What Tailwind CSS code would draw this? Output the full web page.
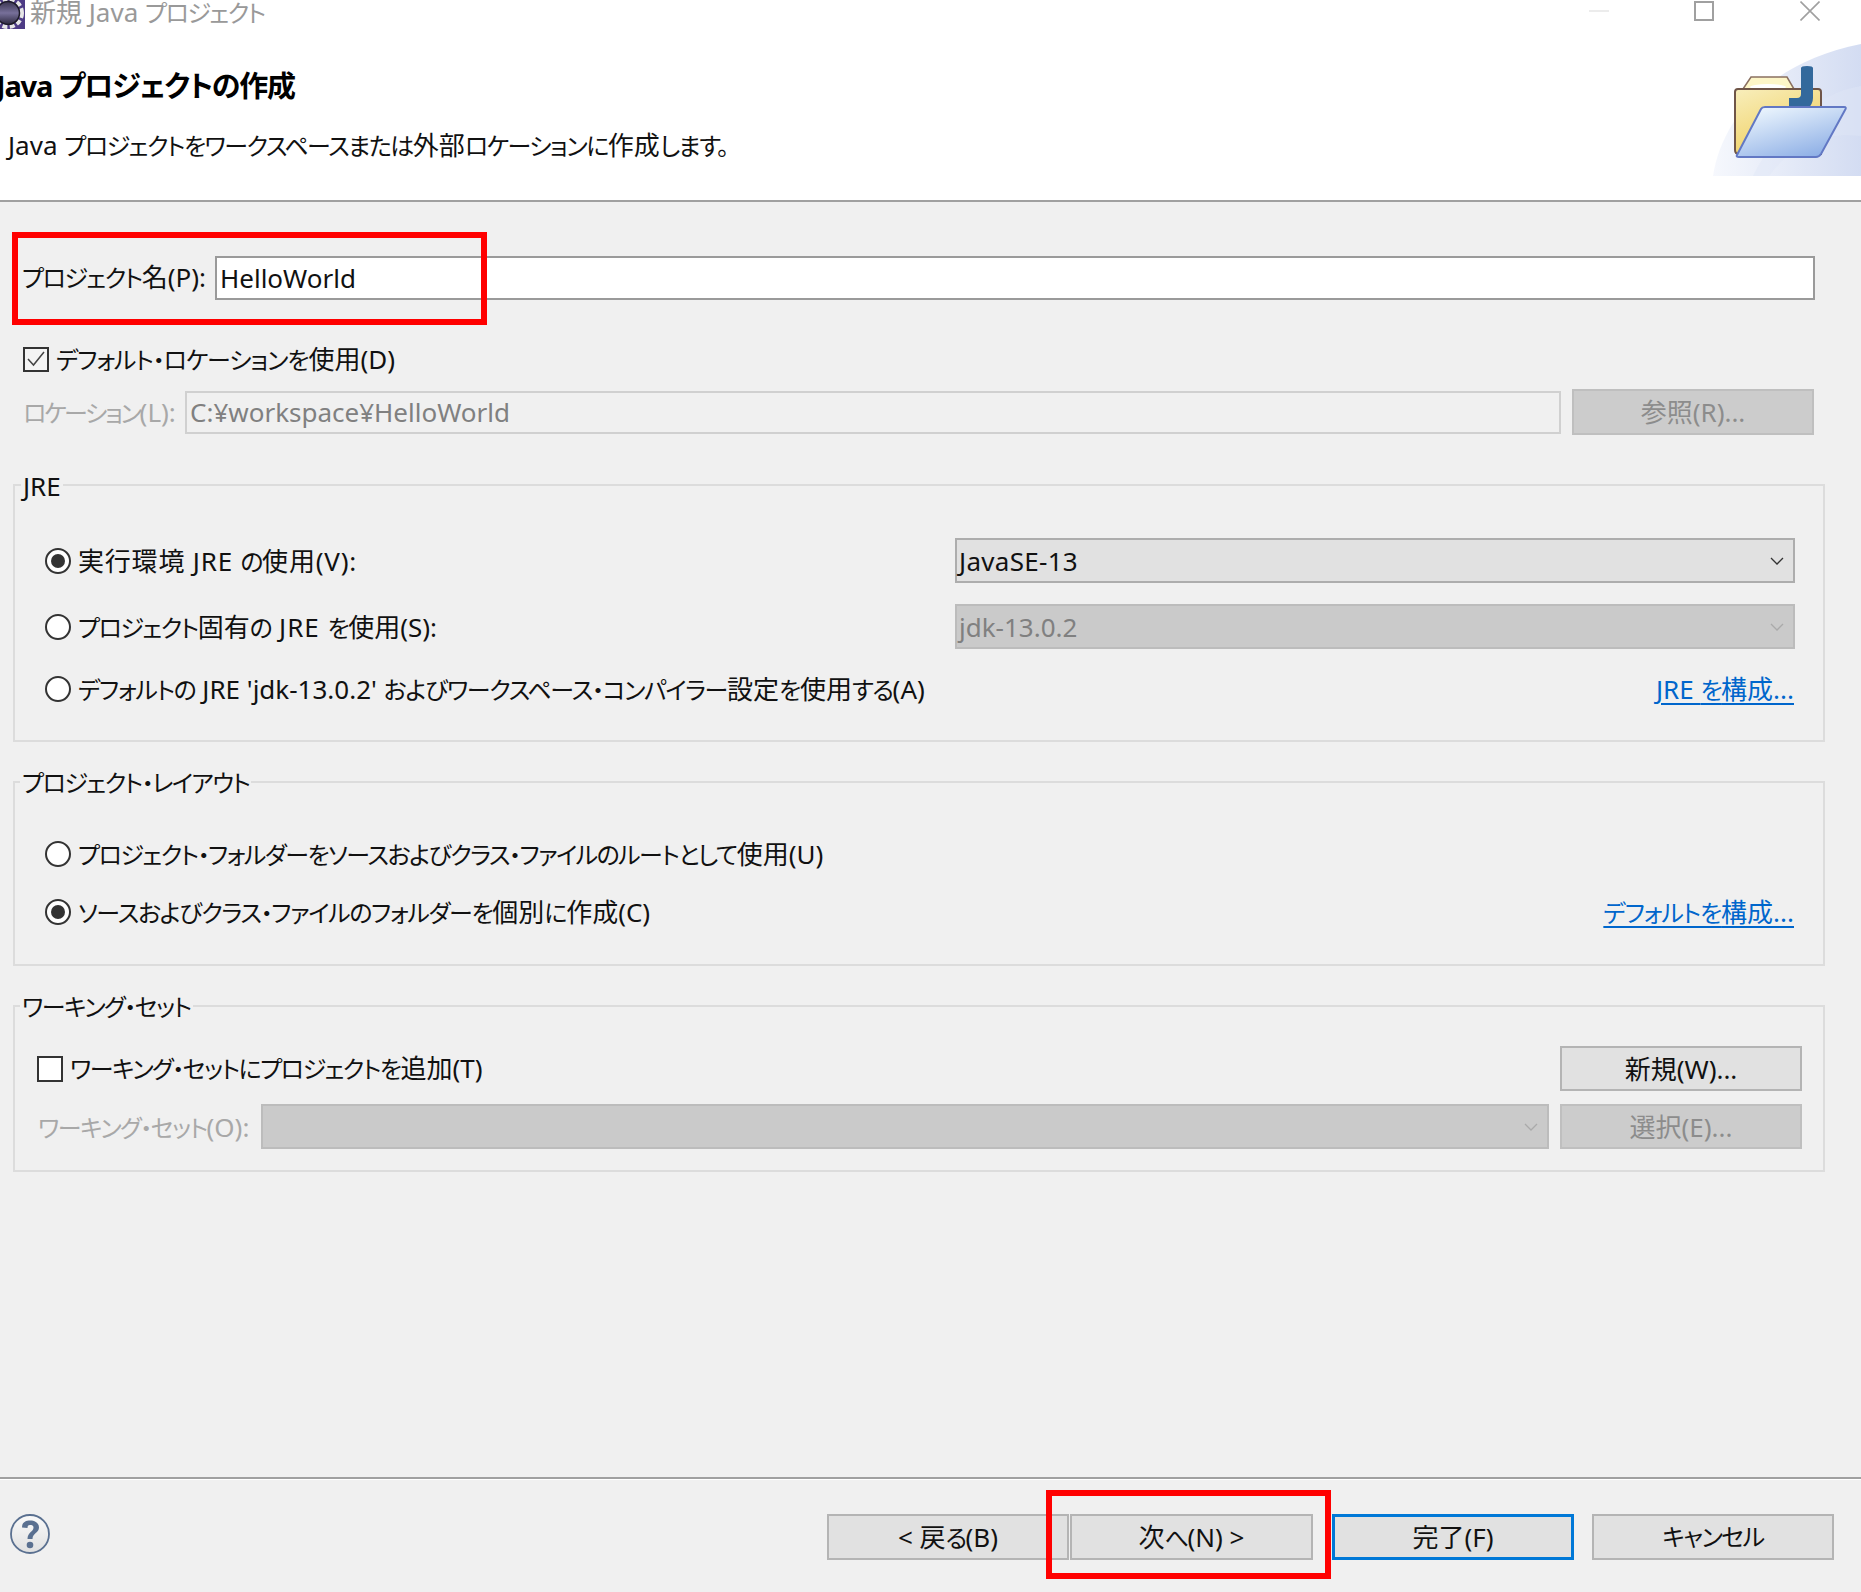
<!DOCTYPE html>
<html lang="ja">
<head>
  <meta charset="UTF-8">
  <title>新規 Java プロジェクト</title>
  <script src="https://cdn.jsdelivr.net/npm/@tailwindcss/browser@4"></script>
</head>
<!-- kana is set smaller and tighter to get the narrow Meiryo UI look, <i> marks kanji and latin runs -->
<body class="bg-[#f0f0f0] font-['Noto_Sans','Noto_Sans_CJK_JP',sans-serif] text-[24px] tracking-[-1.5px] leading-none text-[#111] whitespace-nowrap [font-feature-settings:'palt'] overflow-hidden [&_i]:not-italic [&_i]:tracking-normal [&_i]:text-[26px]">
  <div class="relative w-[1861px] h-[1592px] flex flex-col overflow-hidden">

    <!-- header -->
    <div class="relative h-[202px] shrink-0 bg-white border-b-2 border-[#a0a0a0]">
      <div class="flex items-start h-[30px]">
        <svg class="w-[25px] h-[29px] shrink-0" viewBox="0 0 25 29">
          <defs><linearGradient id="eye" x1="0" x2="0" y1="0" y2="1"><stop offset="0" stop-color="#3a3550"/><stop offset="0.5" stop-color="#77709a"/><stop offset="1" stop-color="#2e2a40"/></linearGradient></defs>
          <rect width="25" height="29" fill="#4d3b85"/>
          <circle cx="8" cy="13" r="14" fill="none" stroke="#e6e6e6" stroke-width="4" stroke-dasharray="5 2.500"/>
          <circle cx="8" cy="13" r="11.500" fill="url(#eye)" stroke="#1d1b28" stroke-width="1.500"/>
        </svg>
        <span class="ml-[5px] text-[#999] leading-[24px]"><i>新規 Java </i>プロジェクト</span>
        <div class="ml-auto flex items-start">
          <div class="w-[20px] h-[2px] bg-[#ececec] mt-[10px]"></div>
          <div class="w-[20px] h-[20px] border-2 border-[#a0a0a0] ml-[85px] mt-[1px]"></div>
          <svg class="w-[20px] h-[20px] ml-[86px] mr-[41px] mt-[1px]" viewBox="0 0 20 20"><path d="M0.5 0.5 19.5 19.5M19.5 0.5 0.5 19.5" stroke="#a0a0a0" stroke-width="1.6" fill="none"/></svg>
        </div>
      </div>
      <h1 class="-ml-[4px] mt-[41px] text-[29px] font-bold leading-[30px] tracking-[-1.2px] text-black">Java プロジェクトの作成</h1>
      <p class="ml-[8px] mt-[29px] leading-[30px]"><i>Java </i>プロジェクトをワークスペースまたは<i>外部</i>ロケーションに<i>作成</i>します。</p>
      <!-- banner art -->
      <svg class="absolute right-0 top-[44px] w-[148px] h-[132px]" viewBox="0 0 148 132">
        <defs>
          <linearGradient id="wave" x1="0" x2="1" y1="0" y2="0"><stop offset="0" stop-color="#f6f8fd"/><stop offset="1" stop-color="#d3dcf2"/></linearGradient>
          <linearGradient id="back" x1="0" x2="0.5" y1="0" y2="1"><stop offset="0" stop-color="#f8eebc"/><stop offset="1" stop-color="#f0d060"/></linearGradient>
          <linearGradient id="front" x1="0.1" x2="0.7" y1="0" y2="1"><stop offset="0" stop-color="#f2faff"/><stop offset="1" stop-color="#8fb0e6"/></linearGradient>
        </defs>
        <path d="M0 132C8 80 50 20 148 0V132Z" fill="url(#wave)"/>
        <path d="M40 132C60 90 100 50 148 42V92C110 88 80 100 56 132Z" fill="#dfe6f6" fill-opacity="0.45"/>
        <path d="M30 45 38 33H74L81 45Z" fill="#fdf6c8" stroke="#8a7060" stroke-width="1.500"/>
        <ellipse cx="55" cy="43" rx="18" ry="3" fill="#fff"/>
        <path d="M22 48Q22 45 25 45H105Q108 45 108 48V110H26Q22 110 22 106Z" fill="url(#back)" stroke="#6f5548" stroke-width="2"/>
        <path d="M76 63V54H84Q88 54 88 50V24Q88 22 94 22 100 22 100 24V54Q100 60 94 66H76Z" fill="#33699c"/>
        <path d="M48 65Q49 63 52 63H131Q134 63 132 66L108 110Q106 113 103 113H26Q23 113 24 111Z" fill="url(#front)" stroke="#6278c4" stroke-width="2"/>
      </svg>
    </div>

    <!-- project name -->
    <div class="flex items-center h-[44px] mt-[54px] pl-[22px] pr-[46px]">
      <span class="w-[193px] -mt-[2px]">プロジェクト<i>名(P):</i></span>
      <div class="flex-1 h-full bg-white border-2 border-[#9a9a9a] flex items-center pl-[3px]"><i>HelloWorld</i></div>
    </div>

    <!-- location -->
    <div class="flex items-center h-[25px] mt-[47px] pl-[23px]">
      <svg class="w-[26px] h-[25px] shrink-0" viewBox="0 0 26 25">
        <rect x="1" y="1" width="24" height="23" fill="#f4f4f4" stroke="#333" stroke-width="2"/>
        <path d="M5 12 10.500 18 21 5" fill="none" stroke="#444" stroke-width="1.500"/>
      </svg>
      <span class="ml-[7px] -mt-[2px] tracking-[-1.1px]">デフォルト・ロケーションを<i>使用(D)</i></span>
    </div>
    <div class="flex items-center h-[46px] mt-[17px] pl-[23px] pr-[47px]">
      <span class="w-[162px] text-[#a8a8a8] tracking-[-2.3px]">ロケーション<i>(L):</i></span>
      <div class="flex-1 h-[43px] border-2 border-[#d0d0d0] flex items-center pl-[3px] text-[#808080]"><i>C:¥workspace¥HelloWorld</i></div>
      <button class="w-[242px] h-full ml-[11px] bg-[#cccccc] border-2 border-[#bfbfbf] text-[#8c8c8c]"><i>参照(R)...</i></button>
    </div>

    <!-- JRE -->
    <div class="relative h-[258px] mt-[49px] ml-[13px] w-[1812px] border-2 border-[#dcdcdc] pt-[52px] pl-[30px] pr-[28px]">
      <span class="absolute left-[6px] -top-[15px] h-[30px] px-[2px] flex items-center bg-[#f0f0f0]"><i>JRE</i></span>
      <div class="flex items-center justify-between h-[45px]">
        <label class="flex items-center">
          <svg class="w-[26px] h-[26px] shrink-0" viewBox="0 0 26 26"><circle cx="13" cy="13" r="12" fill="#fff" stroke="#333" stroke-width="2"/><circle cx="13" cy="13" r="7" fill="#333"/></svg>
          <span class="ml-[7px]"><i class="tracking-[0.8px]!">実行環境 JRE </i>の<i class="tracking-[0.8px]!">使用(V):</i></span>
        </label>
        <div class="w-[840px] h-full bg-[#e1e1e1] border-2 border-[#adadad] flex items-center justify-between pl-[2px] pr-[9px]">
          <i class="tracking-[0.3px]!">JavaSE-13</i>
          <svg class="w-[14px] h-[8px]" viewBox="0 0 14 8"><path d="M1 1 7 7 13 1" fill="none" stroke="#333" stroke-width="1.300"/></svg>
        </div>
      </div>
      <div class="flex items-center justify-between h-[45px] mt-[21px]">
        <label class="flex items-center">
          <svg class="w-[26px] h-[26px] shrink-0" viewBox="0 0 26 26"><circle cx="13" cy="13" r="12" fill="#fff" stroke="#333" stroke-width="2"/></svg>
          <span class="ml-[7px]">プロジェクト<i>固有</i>の<i class="tracking-[1px]!"> JRE </i>を<i>使用(S):</i></span>
        </label>
        <div class="w-[840px] h-full bg-[#cacaca] border-2 border-[#bcbcbc] flex items-center justify-between pl-[2px] pr-[9px] text-[#808080]">
          <i>jdk-13.0.2</i>
          <svg class="w-[14px] h-[8px]" viewBox="0 0 14 8"><path d="M1 1 7 7 13 1" fill="none" stroke="#aaa" stroke-width="1.300"/></svg>
        </div>
      </div>
      <div class="flex items-center justify-between h-[40px] mt-[20px]">
        <label class="flex items-center">
          <svg class="w-[26px] h-[26px] shrink-0" viewBox="0 0 26 26"><circle cx="13" cy="13" r="12" fill="#fff" stroke="#333" stroke-width="2"/></svg>
          <span class="ml-[7px] tracking-[-1.3px]">デフォルトの<i> JRE 'jdk-13.0.2' </i>およびワークスペース・コンパイラー<i>設定</i>を<i>使用</i>する<i>(A)</i></span>
        </label>
        <a class="text-[#0066cc] underline underline-offset-4 mr-[1px]"><i>JRE </i>を<i>構成...</i></a>
      </div>
    </div>

    <!-- layout -->
    <div class="relative h-[185px] mt-[39px] ml-[13px] w-[1812px] border-2 border-[#dcdcdc] pt-[51px] pl-[30px] pr-[28px]">
      <span class="absolute left-[5px] -top-[15px] h-[30px] px-[2px] flex items-center bg-[#f0f0f0]">プロジェクト・レイアウト</span>
      <div class="flex items-center h-[40px]">
        <svg class="w-[26px] h-[26px] shrink-0" viewBox="0 0 26 26"><circle cx="13" cy="13" r="12" fill="#fff" stroke="#333" stroke-width="2"/></svg>
        <span class="ml-[7px]">プロジェクト・フォルダーをソースおよびクラス・ファイルのルートとして<i>使用(U)</i></span>
      </div>
      <div class="flex items-center justify-between h-[40px] mt-[18px]">
        <label class="flex items-center">
          <svg class="w-[26px] h-[26px] shrink-0" viewBox="0 0 26 26"><circle cx="13" cy="13" r="12" fill="#fff" stroke="#333" stroke-width="2"/><circle cx="13" cy="13" r="7" fill="#333"/></svg>
          <span class="ml-[7px] tracking-[-1.3px]">ソースおよびクラス・ファイルのフォルダーを<i>個別</i>に<i>作成(C)</i></span>
        </label>
        <a class="text-[#0066cc] underline underline-offset-4 mr-[1px] tracking-[-1.1px]">デフォルトを<i>構成...</i></a>
      </div>
    </div>

    <!-- working set -->
    <div class="relative h-[167px] mt-[39px] ml-[13px] w-[1812px] border-2 border-[#dcdcdc] pt-[39px] pl-[22px] pr-[21px]">
      <span class="absolute left-[5px] -top-[15px] h-[30px] px-[2px] flex items-center bg-[#f0f0f0]">ワーキング・セット</span>
      <div class="flex items-center justify-between h-[45px]">
        <label class="flex items-center">
          <span class="w-[26px] h-[26px] bg-white border-2 border-[#333] shrink-0"></span>
          <span class="ml-[7px] -mt-[2px]">ワーキング・セットにプロジェクトを<i>追加(T)</i></span>
        </label>
        <button class="w-[242px] h-full bg-[#e1e1e1] border-2 border-[#b4b4b4]"><i>新規(W)...</i></button>
      </div>
      <div class="flex items-center h-[45px] mt-[13px]">
        <span class="w-[224px] pl-[1px] text-[#a8a8a8]">ワーキング・セット<i>(O):</i></span>
        <div class="w-[1288px] h-full bg-[#cacaca] border-2 border-[#bcbcbc] flex items-center justify-end pr-[9px]">
          <svg class="w-[14px] h-[8px]" viewBox="0 0 14 8"><path d="M1 1 7 7 13 1" fill="none" stroke="#aaa" stroke-width="1.300"/></svg>
        </div>
        <button class="w-[242px] h-full ml-[11px] bg-[#cccccc] border-2 border-[#bfbfbf] text-[#8c8c8c]"><i>選択(E)...</i></button>
      </div>
    </div>

    <!-- footer -->
    <div class="mt-auto h-[115px] shrink-0 border-t-2 border-[#a0a0a0] shadow-[inset_0_1px_0_#fff] flex items-start">
      <svg class="w-[40px] h-[40px] ml-[10px] mt-[35px] shrink-0" viewBox="0 0 40 40">
        <defs><linearGradient id="help" x1="0" x2="0" y1="0" y2="1"><stop offset="0" stop-color="#fafafa"/><stop offset="1" stop-color="#e0e0e0"/></linearGradient></defs>
        <circle cx="20" cy="20" r="19" fill="url(#help)" stroke="#5a7090" stroke-width="1.800"/>
        <path d="M12 13.500C12 8 16 6.500 20 6.500 25 6.500 29 9 29 13.500 29 19 22.500 19 22.500 25H17.500C17.500 18 23.500 18 23.500 13.500 23.500 11.500 22 11 20 11 18 11 17.500 12 17.500 14Z" fill="#5a7090"/>
        <circle cx="20" cy="31" r="3.300" fill="#5a7090"/>
      </svg>
      <div class="ml-auto flex mt-[35px] h-[46px] mr-[27px]">
        <button class="w-[242px] h-full bg-[#e1e1e1] border-2 border-[#b4b4b4]"><i>&lt; 戻</i>る<i>(B)</i></button>
        <button class="w-[243px] h-full ml-[1px] bg-[#e1e1e1] border-2 border-[#b4b4b4]"><i>次</i>へ<i>(N) &gt;</i></button>
        <button class="w-[242px] h-full ml-[19px] bg-[#e1e1e1] border-[3px] border-[#0078d7]"><i>完了(F)</i></button>
        <button class="w-[242px] h-full ml-[18px] bg-[#e1e1e1] border-2 border-[#b4b4b4]">キャンセル</button>
      </div>
    </div>

    <!-- red annotations -->
    <div class="absolute left-[12px] top-[232px] w-[475px] h-[93px] border-[6px] border-[#ff0000]"></div>
    <div class="absolute left-[1046px] top-[1490px] w-[285px] h-[89px] border-[6px] border-[#ff0000]"></div>
  </div>
</body>
</html>
